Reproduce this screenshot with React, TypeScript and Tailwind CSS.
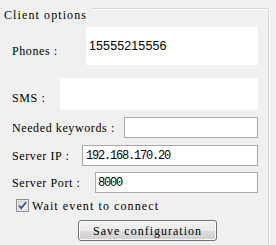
const label = "font-['Liberation_Serif',serif] text-[12px] tracking-[0.6px] leading-[16px] text-black";
const value = "font-['Liberation_Mono',monospace] text-[12px] tracking-[-1.2px] leading-[16px] text-black";

function CheckBox() {
  return (
    <svg width="13" height="13" viewBox="0 0 13 13" className="shrink-0">
      <defs>
        <linearGradient id="cbFill" x1="0" y1="0" x2="1" y2="1">
          <stop offset="0" stopColor="#dcdcdc" />
          <stop offset="1" stopColor="#fbfbfb" />
        </linearGradient>
      </defs>
      <rect x="0.5" y="0.5" width="12" height="12" fill="#fff" stroke="#8e8f8f" />
      <rect x="2" y="2" width="9" height="9" fill="url(#cbFill)" stroke="#b0b4bb" strokeWidth="0.6" />
      <path d="M3 6.5 L5.3 9.2 L10 3.2" fill="none" stroke="#3d4f8f" strokeWidth="1.8" strokeLinejoin="round" />
    </svg>
  );
}

function Field({ text, width, val, pad = "pl-[3px]" }: { text: string; width: string; val?: string; pad?: string }) {
  return (
    <div className="flex items-center justify-between h-[21px]">
      <span className={label}>{text}</span>
      <div className={`${width} h-[21px] bg-white border border-[#a9a9a9] flex items-center ${pad}`}>
        {val && <span className={value}>{val}</span>}
      </div>
    </div>
  );
}

export default function App() {
  return (
    <div className="w-[276px] h-[245px] bg-[#f0f0f0] overflow-hidden relative">
      {/* group box title sits over the etched border */}
      <div className="absolute left-[2px] top-[1px] pl-[2px] pr-[4px] bg-[#f0f0f0]">
        <span className={`${label} tracking-[1.1px]`}>Client options</span>
      </div>

      <div className="pt-[8px]">
        <div className="w-[270px] h-[260px] border-t border-r border-t-[#d5d9dc] border-r-white rounded-tr-[3px]">
          <div className="h-full border-t border-r border-t-white border-r-[#d5d9dc] rounded-tr-[3px] pt-[17px] pl-[12px]">
            <div className="w-[246px] flex flex-col">
              {/* Phones */}
              <div className="flex justify-between items-start h-[38px]">
                <span className={`${label} mt-[16px]`}>Phones :</span>
                <div className="w-[172px] h-[38px] bg-white pl-[3px] pt-[5px]">
                  <span className="font-['Liberation_Sans',sans-serif] text-[12.5px] leading-[16px] tracking-[0.1px] text-black">
                    15555215556
                  </span>
                </div>
              </div>

              {/* SMS */}
              <div className="flex justify-between items-start h-[32px] mt-[13px]">
                <span className={`${label} mt-[12px]`}>SMS :</span>
                <div className="w-[198px] h-[32px] bg-white" />
              </div>

              <div className="mt-[7px]">
                <Field text="Needed keywords :" width="w-[134px]" />
              </div>
              <div className="mt-[7px]">
                <Field text="Server IP :" width="w-[176px]" val="192.168.170.20" />
              </div>
              <div className="mt-[6px]">
                <Field text="Server Port :" width="w-[163px]" val="8000" pad="pl-[2px]" />
              </div>

              {/* checkbox */}
              <div className="flex items-center gap-[3px] mt-[6px] ml-[4px] h-[13px]">
                <CheckBox />
                <span className={`${label} tracking-[1.1px]`}>Wait event to connect</span>
              </div>

              {/* button */}
              <div className="mt-[8px] ml-[66px]">
                <button className="w-[139px] h-[21px] rounded-[3px] border border-[#707070] bg-[linear-gradient(to_bottom,#f2f2f2_0%,#ebebeb_50%,#dddddd_50%,#cfcfcf_100%)] shadow-[inset_0_0_0_1px_#fcfcfc] flex items-center justify-center">
                  <span className={`${label} tracking-[1px]`}>Save configuration</span>
                </button>
              </div>
            </div>
          </div>
        </div>
      </div>
    </div>
  );
}
